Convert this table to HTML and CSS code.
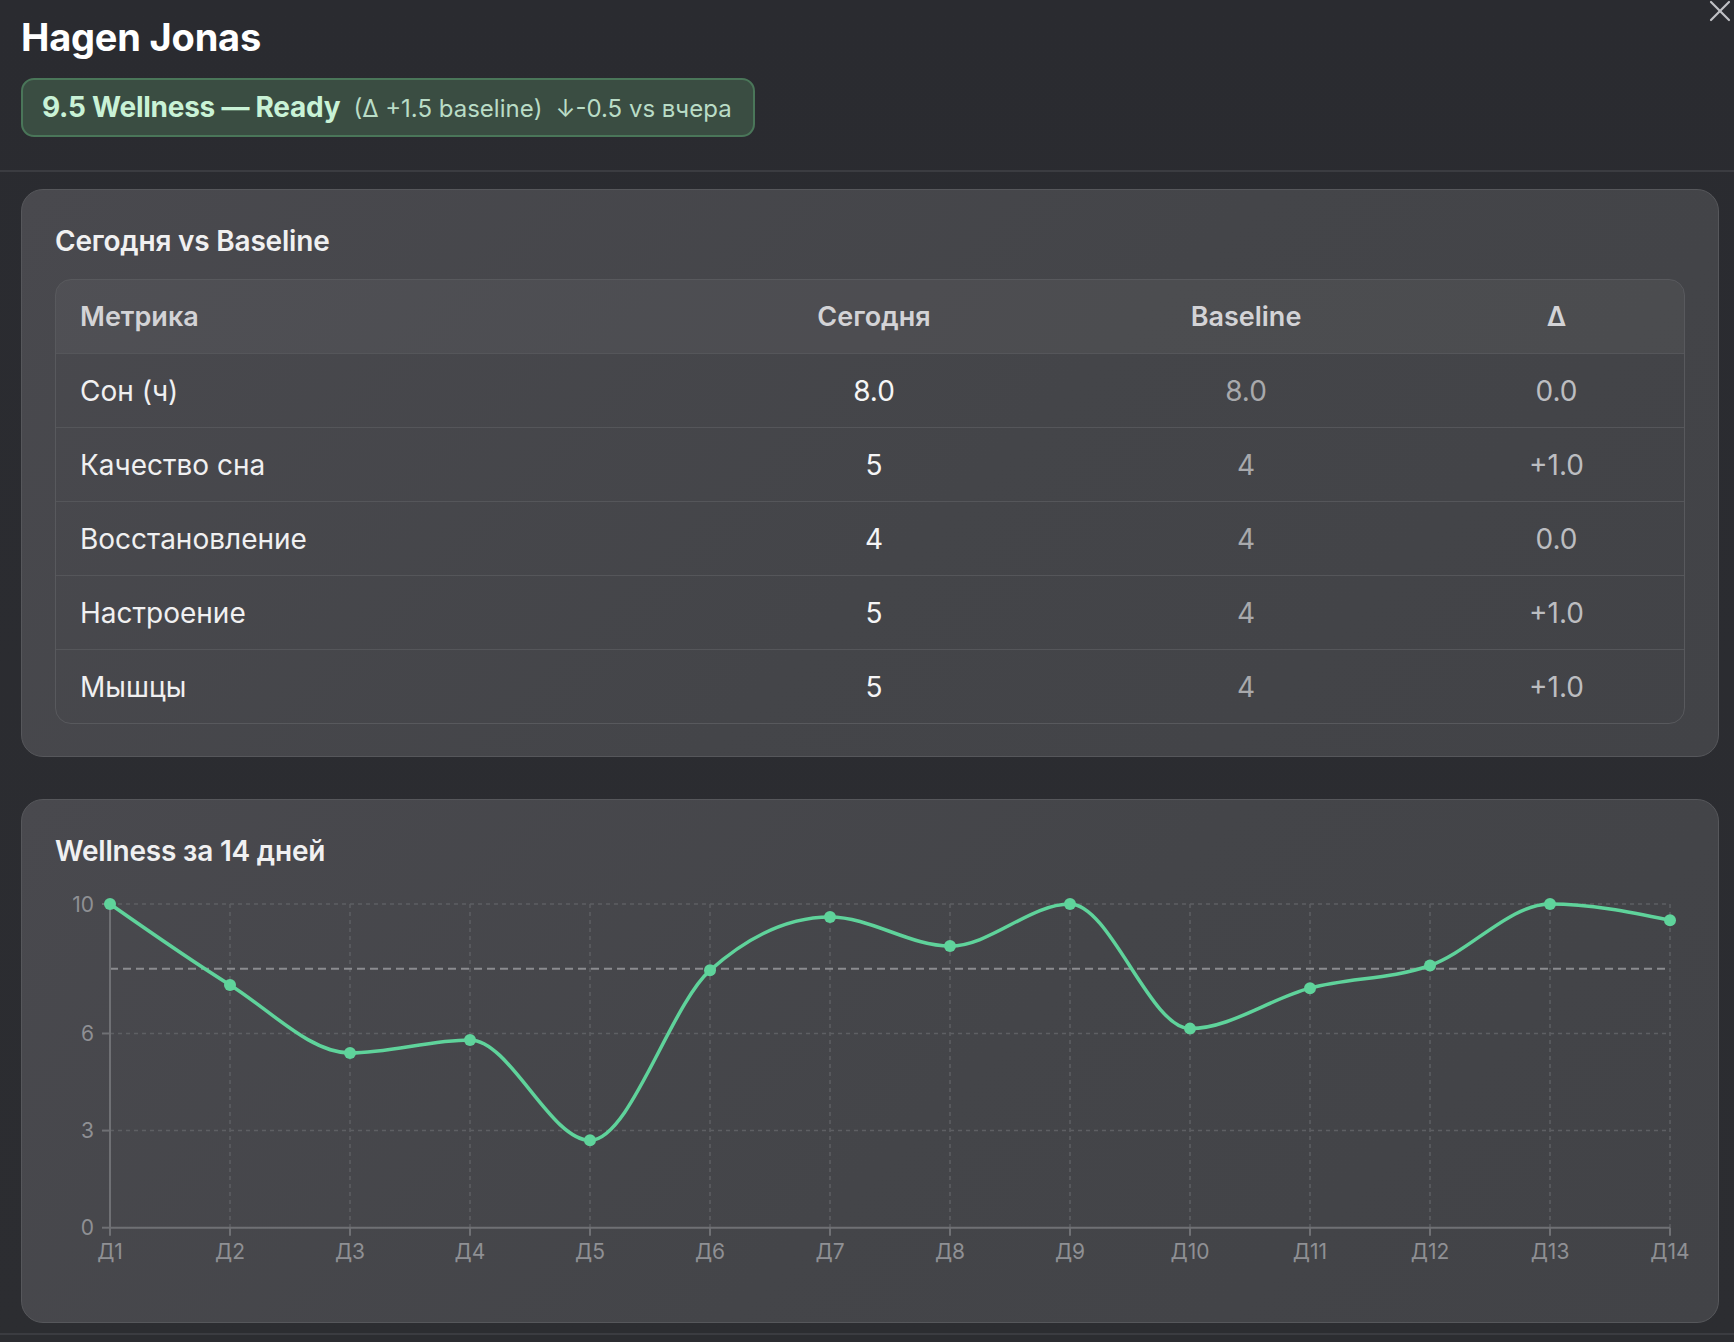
FILE: index.html
```html
<!DOCTYPE html>
<html lang="ru">
<head>
<meta charset="utf-8">
<title>Hagen Jonas — Wellness</title>
<link rel="stylesheet" href="styles.css">
</head>
<body>
<div class="modal">
  <svg class="close" width="24" height="22" viewBox="0 0 24 22" aria-label="Закрыть">
    <line x1="3" y1="2" x2="21" y2="20"/>
    <line x1="21" y1="2" x2="3" y2="20"/>
  </svg>
  <header class="head">
    <h1 class="name">Hagen Jonas</h1>
    <div class="badge">
      <span class="badge-main">9.5 Wellness — Ready</span>
      <span class="badge-sub">(Δ +1.5 baseline)</span>
      <span class="badge-sub">↓-0.5 vs вчера</span>
    </div>
  </header>
  <main class="body">
    <section class="card">
      <h2 class="card-title">Сегодня vs Baseline</h2>
      <div class="table-wrap">
        <div class="row row-head">
          <div class="cell cell-name">Метрика</div>
          <div class="cell">Сегодня</div>
          <div class="cell">Baseline</div>
          <div class="cell">Δ</div>
        </div>
        <div class="row">
          <div class="cell cell-name">Сон (ч)</div>
          <div class="cell cell-today">8.0</div>
          <div class="cell cell-base">8.0</div>
          <div class="cell cell-delta">0.0</div>
        </div>
        <div class="row">
          <div class="cell cell-name">Качество сна</div>
          <div class="cell cell-today">5</div>
          <div class="cell cell-base">4</div>
          <div class="cell cell-delta">+1.0</div>
        </div>
        <div class="row">
          <div class="cell cell-name">Восстановление</div>
          <div class="cell cell-today">4</div>
          <div class="cell cell-base">4</div>
          <div class="cell cell-delta">0.0</div>
        </div>
        <div class="row">
          <div class="cell cell-name">Настроение</div>
          <div class="cell cell-today">5</div>
          <div class="cell cell-base">4</div>
          <div class="cell cell-delta">+1.0</div>
        </div>
        <div class="row">
          <div class="cell cell-name">Мышцы</div>
          <div class="cell cell-today">5</div>
          <div class="cell cell-base">4</div>
          <div class="cell cell-delta">+1.0</div>
        </div>
      </div>
    </section>
    <section class="card chart-card">
      <h2 class="card-title">Wellness за 14 дней</h2>
      <div id="chart" class="chart"></div>
    </section>
  </main>
  <div class="foot"></div>
</div>
<script src="chart.js"></script>
</body>
</html>
```

FILE: styles.css
```css
html, body {
  margin: 0;
  padding: 0;
}
body {
  background: #2b2c30;
  font-family: Inter, "Noto Sans", "DejaVu Sans", sans-serif;
  color: #f2f2f3;
}
.modal {
  position: relative;
  min-height: 1342px;
  background: linear-gradient(180deg, #2a2b30 0%, #2c2d31 100%);
}
.close {
  position: absolute;
  top: 0;
  right: 2px;
}
.close line {
  stroke: #c0c1c5;
  stroke-width: 2.2;
  stroke-linecap: round;
}
.head {
  box-sizing: border-box;
  height: 172px;
  padding: 14px 21px 0;
  border-bottom: 2px solid #3b3c41;
}
.name {
  margin: 0;
  font-size: 38px;
  line-height: 46px;
  font-weight: 700;
  letter-spacing: -0.2px;
  color: #ffffff;
}
.badge {
  display: inline-flex;
  align-items: baseline;
  box-sizing: border-box;
  height: 59px;
  margin-top: 18px;
  padding: 0 21px 0 19px;
  border: 2px solid #4a7659;
  border-radius: 13px;
  background: #3a4d42;
  line-height: 55px;
  white-space: nowrap;
}
.badge-main {
  font-size: 28px;
  font-weight: 700;
  letter-spacing: -0.25px;
  color: #c9f2d6;
}
.badge-sub {
  font-size: 24px;
  font-weight: 400;
  color: #b9dcc6;
  margin-left: 13px;
}
.body {
  padding: 17px 15px 10px 21px;
}
.card {
  border: 1px solid #56575b;
  border-radius: 22px;
  background: linear-gradient(135deg, #49494e 0%, #444549 55%, #424347 100%);
  padding: 35px 33px 32px;
}
.card + .card {
  margin-top: 42px;
}
.card-title {
  margin: 0 0 21px;
  font-size: 28px;
  line-height: 33px;
  font-weight: 600;
  letter-spacing: -0.2px;
  color: #f0f0f1;
}
.chart-card {
  padding-bottom: 33px;
}
.chart-card .card-title {
  margin-bottom: 11px;
}
.table-wrap {
  border: 1px solid #58595d;
  border-radius: 16px;
  overflow: hidden;
}
.row {
  display: grid;
  grid-template-columns: 629px 378px 366px 1fr;
  align-items: center;
  box-sizing: border-box;
  height: 74px;
  border-bottom: 1px solid #55565a;
  font-size: 28px;
  line-height: 34px;
}
.row:last-child {
  height: 73px;
  border-bottom: none;
}
.row-head {
  background: rgba(255, 255, 255, 0.045);
  font-size: 27px;
  font-weight: 600;
  color: #d3d3d6;
}
.cell {
  text-align: center;
}
.cell-name {
  text-align: left;
  padding-left: 24px;
}
.row:not(.row-head) .cell-name {
  color: #f0f0f1;
}
.cell-today {
  color: #f5f5f6;
}
.cell-base {
  color: #a8a9ac;
}
.cell-delta {
  color: #bcbdc0;
}
.chart {
  height: 410px;
}
.chart svg {
  display: block;
  overflow: visible;
}
.chart .grid {
  stroke: #5e5f63;
  stroke-width: 1.5;
  stroke-dasharray: 4 4;
}
.chart .ref {
  stroke: #8a8b8f;
  stroke-width: 2;
  stroke-dasharray: 8 5;
}
.chart .axis {
  stroke: #6f7074;
  stroke-width: 2;
}
.chart .tick-label {
  fill: #8f9094;
  font-size: 21px;
  font-family: Inter, "Noto Sans", sans-serif;
}
.chart .series {
  fill: none;
  stroke: #5fd39b;
  stroke-width: 3.5;
  stroke-linejoin: round;
  stroke-linecap: round;
}
.chart .dot {
  fill: #5fd39b;
}
.foot {
  border-top: 2px solid #3b3c41;
  height: 8px;
}
```

FILE: chart.js
```js
(function () {
  var data = [10, 7.5, 5.4, 5.8, 2.7, 7.95, 9.6, 8.7, 10, 6.15, 7.4, 8.1, 10, 9.5];
  var W = 1630, H = 410;
  var x0 = 55, step = 120, yTop = 25, yBot = 348.7;
  function sx(i) { return x0 + step * i; }
  function sy(v) { return yBot - (yBot - yTop) * v / 10; }
  var xEnd = sx(data.length - 1);
  var s = '<svg xmlns="http://www.w3.org/2000/svg" width="' + W + '" height="' + H + '" viewBox="0 0 ' + W + ' ' + H + '">';

  [10, 6, 3].forEach(function (v) {
    var y = sy(v).toFixed(2);
    s += '<line class="grid" x1="' + x0 + '" x2="' + xEnd + '" y1="' + y + '" y2="' + y + '"/>';
  });
  for (var i = 1; i < data.length; i++) {
    s += '<line class="grid" x1="' + sx(i) + '" x2="' + sx(i) + '" y1="' + yTop + '" y2="' + yBot + '"/>';
  }
  var yr = sy(8).toFixed(2);
  s += '<line class="ref" x1="' + x0 + '" x2="' + xEnd + '" y1="' + yr + '" y2="' + yr + '"/>';

  s += '<line class="axis" x1="' + x0 + '" x2="' + x0 + '" y1="' + yTop + '" y2="' + yBot + '"/>';
  s += '<line class="axis" x1="' + x0 + '" x2="' + xEnd + '" y1="' + yBot + '" y2="' + yBot + '"/>';

  [0, 3, 6, 10].forEach(function (v) {
    var y = sy(v).toFixed(2);
    s += '<line class="axis" x1="' + (x0 - 8) + '" x2="' + x0 + '" y1="' + y + '" y2="' + y + '"/>';
    s += '<text class="tick-label" x="' + (x0 - 16) + '" y="' + y + '" text-anchor="end" dominant-baseline="central">' + v + '</text>';
  });
  for (var j = 0; j < data.length; j++) {
    s += '<line class="axis" x1="' + sx(j) + '" x2="' + sx(j) + '" y1="' + yBot + '" y2="' + (yBot + 8) + '"/>';
    s += '<text class="tick-label" x="' + sx(j) + '" y="380" text-anchor="middle">Д' + (j + 1) + '</text>';
  }

  var pts = data.map(function (v, k) { return [sx(k), sy(v)]; });
  var n = pts.length;
  function sign(x) { return x < 0 ? -1 : 1; }
  var t = new Array(n);
  for (var a = 1; a < n - 1; a++) {
    var h0 = pts[a][0] - pts[a - 1][0], h1 = pts[a + 1][0] - pts[a][0];
    var s0 = (pts[a][1] - pts[a - 1][1]) / h0, s1 = (pts[a + 1][1] - pts[a][1]) / h1;
    var p = (s0 * h1 + s1 * h0) / (h0 + h1);
    t[a] = (sign(s0) + sign(s1)) * Math.min(Math.abs(s0), Math.abs(s1), 0.5 * Math.abs(p)) || 0;
  }
  t[0] = (3 * (pts[1][1] - pts[0][1]) / (pts[1][0] - pts[0][0]) - t[1]) / 2;
  t[n - 1] = (3 * (pts[n - 1][1] - pts[n - 2][1]) / (pts[n - 1][0] - pts[n - 2][0]) - t[n - 2]) / 2;

  var d = 'M' + pts[0][0] + ',' + pts[0][1].toFixed(2);
  for (var b = 0; b < n - 1; b++) {
    var dx = (pts[b + 1][0] - pts[b][0]) / 3;
    d += 'C' + (pts[b][0] + dx).toFixed(2) + ',' + (pts[b][1] + dx * t[b]).toFixed(2) + ' ' +
      (pts[b + 1][0] - dx).toFixed(2) + ',' + (pts[b + 1][1] - dx * t[b + 1]).toFixed(2) + ' ' +
      pts[b + 1][0] + ',' + pts[b + 1][1].toFixed(2);
  }
  s += '<path class="series" d="' + d + '"/>';
  pts.forEach(function (pt) {
    s += '<circle class="dot" cx="' + pt[0] + '" cy="' + pt[1].toFixed(2) + '" r="6"/>';
  });
  s += '</svg>';
  document.getElementById('chart').innerHTML = s;
})();
```
